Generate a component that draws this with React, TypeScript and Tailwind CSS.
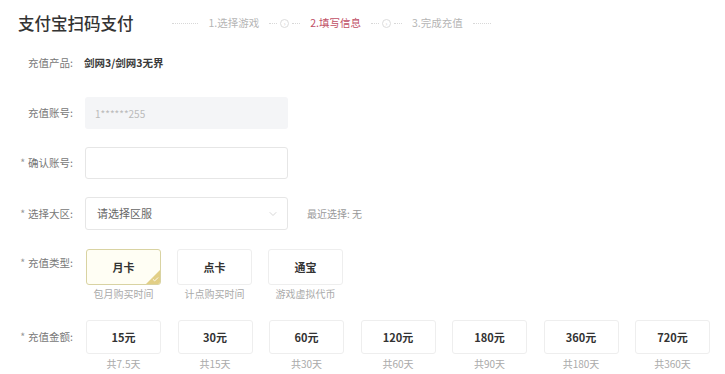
import { ChevronDown, Check } from "lucide-react";

const types = [
  { name: "月卡", desc: "包月购买时间", active: true },
  { name: "点卡", desc: "计点购买时间", active: false },
  { name: "通宝", desc: "游戏虚拟代币", active: false },
];

const amounts = [
  { price: "15元", days: "共7.5天" },
  { price: "30元", days: "共15天" },
  { price: "60元", days: "共30天" },
  { price: "120元", days: "共60天" },
  { price: "180元", days: "共90天" },
  { price: "360元", days: "共180天" },
  { price: "720元", days: "共360天" },
];

function Label({ text, required }: { text: string; required?: boolean }) {
  return (
    <div className="w-[55px] shrink-0 text-right text-[10.5px] leading-[14px] text-[#777]">
      {required && <span className="mr-[3px] text-[#999]">*</span>}
      {text}:
    </div>
  );
}

function Connector() {
  return (
    <div className="mx-[10px] flex items-center gap-[3px]">
      <div className="w-[8px] border-t border-dotted border-[#d8d8d8]" />
      <div className="flex h-[9px] w-[9px] items-center justify-center rounded-full border border-[#dcdcdc] text-[6px] leading-none text-[#ccc]">
        ›
      </div>
      <div className="w-[8px] border-t border-dotted border-[#d8d8d8]" />
    </div>
  );
}

export default function App() {
  return (
    <div className="h-[374px] w-[725px] overflow-hidden bg-white font-['Noto_Sans_CJK_SC','Noto_Sans',sans-serif]">
      {/* Header */}
      <div className="flex h-[47px] items-center pl-[18px]">
        <h1 className="text-[16.5px] font-medium leading-none text-[#333]">支付宝扫码支付</h1>
        <div className="ml-[38px] flex items-center text-[10.5px] leading-none">
          <div className="mr-[11px] w-[26px] border-t border-dotted border-[#d8d8d8]" />
          <span className="text-[#b5b5b5]">1.选择游戏</span>
          <Connector />
          <span className="text-[#bf4f66]">2.填写信息</span>
          <Connector />
          <span className="text-[#b5b5b5]">3.完成充值</span>
          <div className="ml-[10px] w-[18px] border-t border-dotted border-[#d8d8d8]" />
        </div>
      </div>

      {/* Form */}
      <div className="flex flex-col pl-[18px]">
        <div className="flex h-[32px] items-center">
          <Label text="充值产品" />
          <span className="ml-[11px] text-[10.5px] font-bold text-[#3a3a3a]">剑网3/剑网3无界</span>
        </div>

        <div className="mt-[18px] flex h-[32px] items-center">
          <Label text="充值账号" />
          <div className="ml-[12px] flex h-[32px] w-[203px] items-center rounded-[3px] bg-[#f4f5f7] px-[10px] text-[10px] text-[#bbb]">
            1******255
          </div>
        </div>

        <div className="mt-[18px] flex h-[32px] items-center">
          <Label text="确认账号" required />
          <div className="ml-[12px] h-[32px] w-[203px] rounded-[3px] border border-[#e6e6e6] bg-white" />
        </div>

        <div className="mt-[18px] flex h-[33px] items-center">
          <Label text="选择大区" required />
          <div className="ml-[12px] flex h-[33px] w-[203px] items-center justify-between rounded-[3px] border border-[#e6e6e6] bg-white pl-[11px] pr-[8px]">
            <span className="text-[11px] text-[#666]">请选择区服</span>
            <ChevronDown size={12} strokeWidth={1.5} className="text-[#c8c8c8]" />
          </div>
          <span className="ml-[19px] text-[10px] text-[#999]">最近选择: 无</span>
        </div>

        <div className="mt-[19px] flex items-start">
          <div className="pt-[7px]">
            <Label text="充值类型" required />
          </div>
          <div className="ml-[13px] flex gap-[16px]">
            {types.map((t) => (
              <div key={t.name} className="flex w-[75px] flex-col items-center">
                <div
                  className={
                    t.active
                      ? "relative flex h-[36px] w-full items-center justify-center overflow-hidden rounded-[3px] border border-[#d9d3a2] bg-[#fffef4] text-[11px] font-bold text-[#333]"
                      : "relative flex h-[36px] w-full items-center justify-center rounded-[3px] border border-[#eeeeee] bg-white text-[11px] font-bold text-[#333]"
                  }
                >
                  {t.name}
                  {t.active && (
                    <>
                      <div className="absolute bottom-0 right-0 h-0 w-0 border-b-[14px] border-l-[14px] border-b-[#e2cf86] border-l-transparent" />
                      <Check size={7} strokeWidth={3} className="absolute bottom-[1px] right-[1px] text-white" />
                    </>
                  )}
                </div>
                <span className="mt-[2px] text-[10px] leading-[14px] text-[#aaa]">{t.desc}</span>
              </div>
            ))}
          </div>
        </div>

        <div className="mt-[19px] flex items-start">
          <div className="pt-[10px]">
            <Label text="充值金额" required />
          </div>
          <div className="ml-[13px] flex gap-[16.5px]">
            {amounts.map((a) => (
              <div key={a.price} className="flex w-[75px] shrink-0 flex-col items-center">
                <div className="flex h-[34px] w-full items-center justify-center rounded-[3px] border border-[#eeeeee] bg-white text-[11px] font-bold text-[#333]">
                  {a.price}
                </div>
                <span className="mt-[3px] text-[10px] leading-[14px] text-[#aaa]">{a.days}</span>
              </div>
            ))}
          </div>
        </div>
      </div>
    </div>
  );
}
